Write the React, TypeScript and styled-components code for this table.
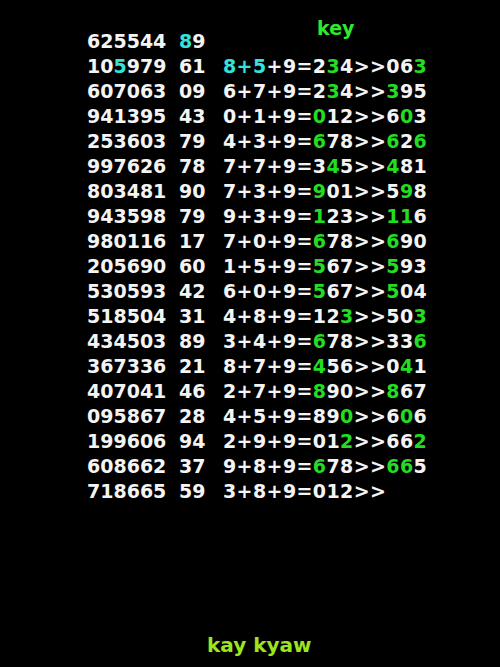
import React from 'react';
import styled, { createGlobalStyle } from 'styled-components';

const Global = createGlobalStyle`
  html, body {
    margin: 0;
    padding: 0;
    background: #000;
  }
`;

// rows: number | pair | formula — {x} = green, [x] = cyan
const rows: [string, string, string][] = [
  ['625544', '[8]9', ''],
  ['10[5]979', '61', '[8+5]+9=2{3}4>>06{3}'],
  ['607063', '09', '6+7+9=2{3}4>>{3}95'],
  ['941395', '43', '0+1+9={0}12>>6{0}3'],
  ['253603', '79', '4+3+9={6}78>>{6}2{6}'],
  ['997626', '78', '7+7+9=3{4}5>>{4}81'],
  ['803481', '90', '7+3+9={9}01>>5{9}8'],
  ['943598', '79', '9+3+9={1}23>>{11}6'],
  ['980116', '17', '7+0+9={6}78>>{6}90'],
  ['205690', '60', '1+5+9={5}67>>{5}93'],
  ['530593', '42', '6+0+9={5}67>>{5}04'],
  ['518504', '31', '4+8+9=12{3}>>50{3}'],
  ['434503', '89', '3+4+9={6}78>>33{6}'],
  ['367336', '21', '8+7+9={4}56>>0{4}1'],
  ['407041', '46', '2+7+9={8}90>>{8}67'],
  ['095867', '28', '4+5+9=89{0}>>6{0}6'],
  ['199606', '94', '2+9+9=01{2}>>66{2}'],
  ['608662', '37', '9+8+9={6}78>>{66}5'],
  ['718665', '59', '3+8+9=012>>'],
];

const Page = styled.div`
  min-height: 667px;
  display: flex;
  flex-direction: column;
  font-family: 'DejaVu Sans', Verdana, sans-serif;
  font-weight: bold;
  color: #f4f4f4;
`;

const Table = styled.div`
  padding: 29px 0 0 87px;
  display: flex;
  flex-direction: column;
`;

const Row = styled.div`
  display: flex;
  font-size: 19px;
  line-height: 25px;
  height: 25px;
  white-space: pre;
`;

const Cell = styled.span<{ $w?: number }>`
  width: ${(p) => (p.$w ? `${p.$w}px` : 'auto')};
  flex: none;
`;

const Formula = styled.span`
  flex: none;
  letter-spacing: 0.4px;
`;

const Key = styled.span`
  color: #2fe82f;
  margin: -13px 0 0 94px;
`;

const Mark = styled.span<{ $tone: 'green' | 'cyan' }>`
  color: ${(p) => (p.$tone === 'green' ? '#22dd22' : '#33e3dc')};
`;

const Footer = styled.div`
  margin-top: auto;
  padding: 0 0 9px 207px;
  font-size: 20px;
  line-height: 25px;
  color: #9be61c;
`;

function Colored({ text }: { text: string }) {
  const parts = text.split(/(\{[^}]*\}|\[[^\]]*\])/).filter(Boolean);
  return (
    <>
      {parts.map((p, i) => {
        if (p.startsWith('{')) return <Mark key={i} $tone="green">{p.slice(1, -1)}</Mark>;
        if (p.startsWith('[')) return <Mark key={i} $tone="cyan">{p.slice(1, -1)}</Mark>;
        return <React.Fragment key={i}>{p}</React.Fragment>;
      })}
    </>
  );
}

export default function App() {
  return (
    <Page>
      <Global />
      <Table>
        {rows.map(([num, pair, formula], i) => (
          <Row key={i}>
            <Cell $w={92}><Colored text={num} /></Cell>
            <Cell $w={44}><Colored text={pair} /></Cell>
            {i === 0 ? <Key>key</Key> : <Formula><Colored text={formula} /></Formula>}
          </Row>
        ))}
      </Table>
      <Footer>kay kyaw</Footer>
    </Page>
  );
}
